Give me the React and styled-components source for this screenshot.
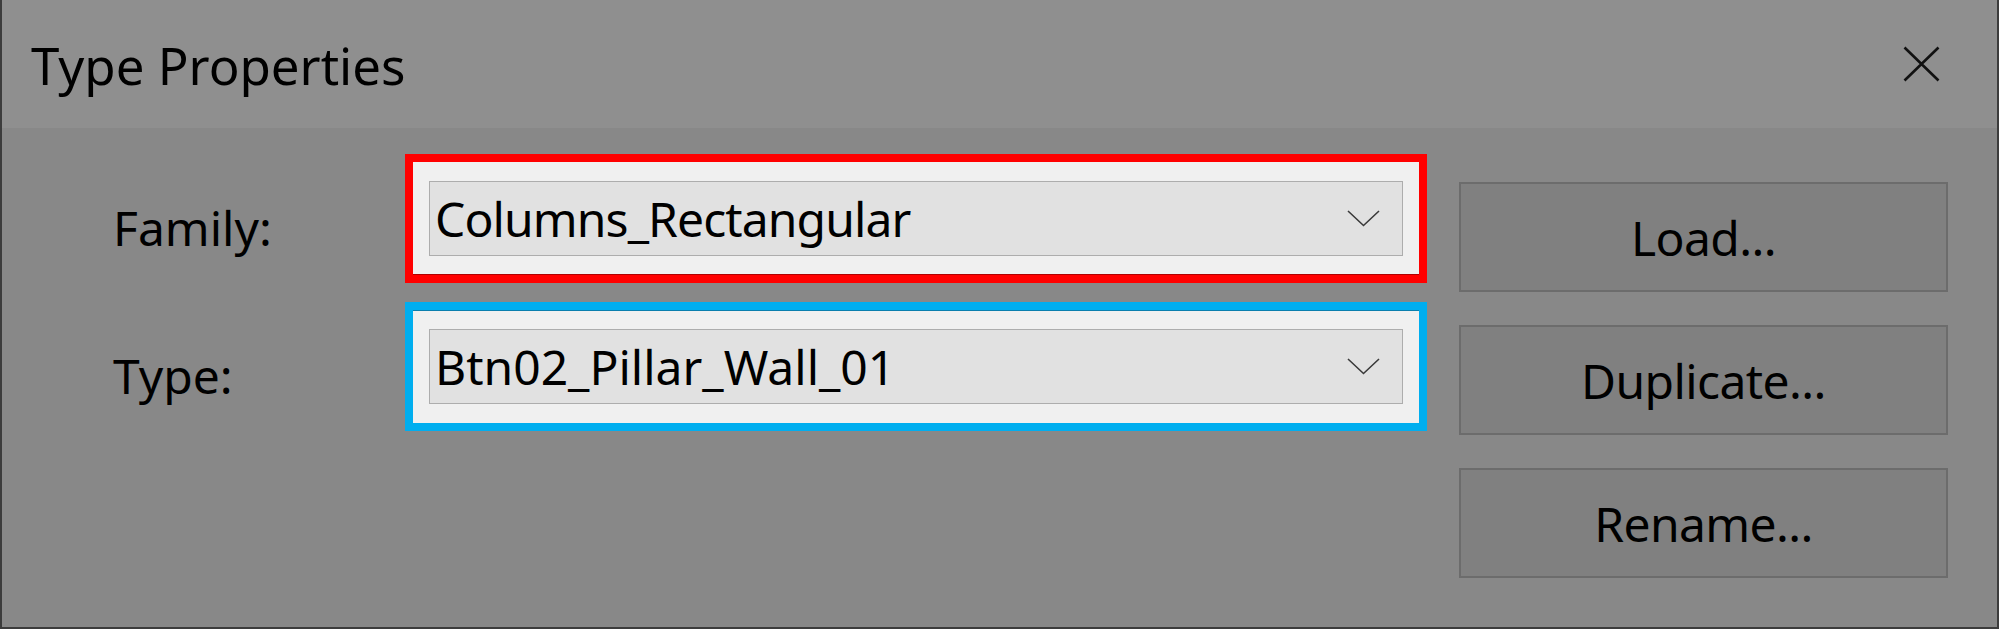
import React from 'react';
import styled, { createGlobalStyle } from 'styled-components';

const GlobalStyle = createGlobalStyle`
  html, body {
    margin: 0;
    padding: 0;
    background: #888888;
  }
  body {
    font-family: 'Noto Sans', 'Liberation Sans', sans-serif;
  }
`;

export const Window = styled.section`
  box-sizing: border-box;
  width: 1999px;
  height: 629px;
  background: #888888;
  border: 2px solid #3c3c3c;
  border-top: none;
  display: flex;
  flex-direction: column;
  color: #000;
`;

export const TitleBar = styled.header`
  height: 128px;
  flex: none;
  background: #8f8f8f;
  display: flex;
  align-items: center;
  justify-content: space-between;
  padding: 0 57px 0 29px;
`;

export const Title = styled.h1`
  margin: 0;
  font-size: 51px;
  font-weight: 400;
  line-height: 1.2;
  margin-top: 4px;
`;

export const CloseButton = styled.button`
  width: 37px;
  height: 36px;
  padding: 0;
  border: none;
  background: transparent;
  display: flex;
  align-items: center;
  justify-content: center;
  cursor: pointer;
`;

export const Body = styled.div`
  flex: 1;
  display: flex;
  padding-left: 111px;
  gap: 32px;
`;

export const Fields = styled.div`
  display: flex;
  flex-direction: column;
  gap: 19px;
  margin-top: 26px;
`;

export const FieldRow = styled.div`
  display: flex;
  align-items: center;
`;

export const Label = styled.label`
  width: 292px;
  box-sizing: border-box;
  padding-top: 18px;
  font-size: 48px;
  line-height: 1.2;
`;

export const Highlight = styled.div`
  box-sizing: border-box;
  width: 1022px;
  height: 129px;
  border: 8px solid ${(p) => p.$color};
  background: #f0f0f0;
  padding: 0 16px;
  display: flex;
  align-items: center;
  box-shadow: ${(p) => p.$shadow};
`;

export const Select = styled.div`
  box-sizing: border-box;
  width: 100%;
  height: 75px;
  border: 1px solid #adadad;
  background: #e1e1e1;
  display: flex;
  align-items: center;
  justify-content: space-between;
  padding: 0 22px 0 5px;
  font-size: 48px;
  letter-spacing: ${(p) => p.$spacing}px;
  line-height: 1;
`;

export const Buttons = styled.div`
  display: flex;
  flex-direction: column;
  gap: 33px;
  margin-top: 54px;
`;

export const Button = styled.button`
  box-sizing: border-box;
  width: 489px;
  height: 110px;
  border: 2px solid #6c6c6c;
  background: #808080;
  font-family: 'Noto Sans', 'Liberation Sans', sans-serif;
  font-size: 48px;
  letter-spacing: -0.6px;
  color: #000;
  padding: 0;
  cursor: pointer;
`;

const Chevron = () => (
  <svg width="33" height="17" viewBox="0 0 33 17">
    <polyline points="1,1 16.5,15.5 32,1" fill="none" stroke="#3a3a3a" strokeWidth="1.6" />
  </svg>
);

const CloseIcon = () => (
  <svg width="37" height="36" viewBox="0 0 37 36">
    <path d="M1.5 1.5 L35.5 34.5 M35.5 1.5 L1.5 34.5" stroke="#111" strokeWidth="2.6" />
  </svg>
);

const ComboField = ({ label, value, color, shadow, spacing }) => (
  <FieldRow>
    <Label>{label}</Label>
    <Highlight $color={color} $shadow={shadow}>
      <Select $spacing={spacing}>
        <span>{value}</span>
        <Chevron />
      </Select>
    </Highlight>
  </FieldRow>
);

export default function App() {
  return (
    <>
      <GlobalStyle />
      <Window>
        <TitleBar>
          <Title>Type Properties</Title>
          <CloseButton aria-label="Close">
            <CloseIcon />
          </CloseButton>
        </TitleBar>
        <Body>
          <Fields>
            <ComboField
              label="Family:"
              value="Columns_Rectangular"
              color="#ff0000"
              shadow="inset 0 -1px 0 #b00000"
              spacing={-0.9}
            />
            <ComboField
              label="Type:"
              value="Btn02_Pillar_Wall_01"
              color="#00aeef"
              shadow="inset 0 1px 0 #0a7fae"
              spacing={0}
            />
          </Fields>
          <Buttons>
            <Button>Load...</Button>
            <Button>Duplicate...</Button>
            <Button>Rename...</Button>
          </Buttons>
        </Body>
      </Window>
    </>
  );
}
